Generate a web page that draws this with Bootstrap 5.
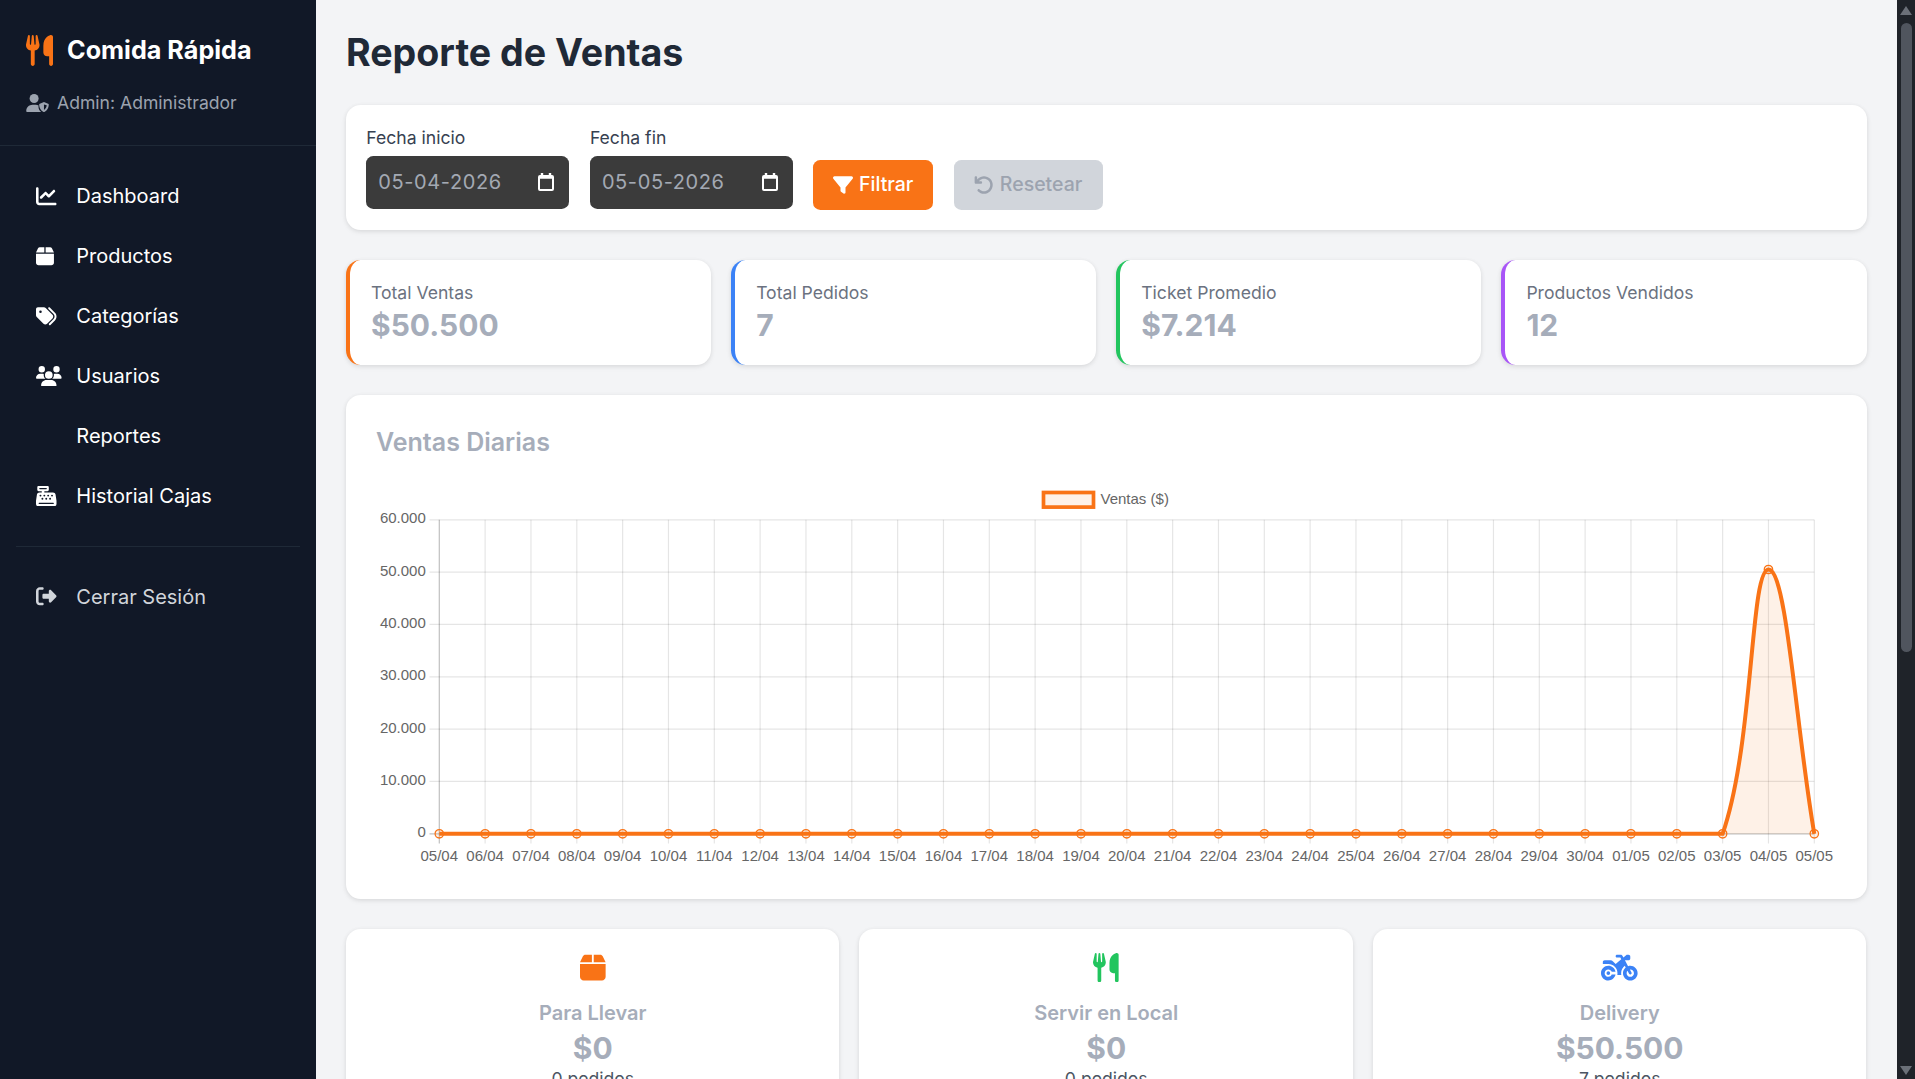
<!DOCTYPE html>
<html lang="es">
<head>
    <meta charset="UTF-8">
    <meta name="viewport" content="width=device-width, initial-scale=1.0">
    <title>Reporte de Ventas</title>
    <link rel="stylesheet" href="https://cdn.jsdelivr.net/npm/bootstrap@5.3.0/dist/css/bootstrap.min.css">
    <style>
        body {
            font-family: Inter, "Liberation Sans", sans-serif;
            background-color: #f3f4f6;
            color: #1f2937;
            height: 1079px;
        }
        .sidebar {
            width: 316px;
            background-color: #111827;
        }
        .brand {
            height: 146px;
            padding: 34px 26px 0;
            border-bottom: 1px solid #1f2937;
        }
        .brand-name {
            font-size: 25.2px;
            font-weight: 700;
            color: #fff;
            line-height: 32px;
            margin-left: 14px;
        }
        .brand-user {
            font-size: 17.6px;
            color: #9ca3af;
            margin-top: 24px;
        }
        .side-nav { padding: 20px 16px 0; }
        .side-link {
            height: 60px;
            color: #fff;
            font-size: 20px;
            text-decoration: none;
            padding-left: 20px;
        }
        .side-link svg { display: block; height: 20.5px; width: auto; fill: currentColor; }
        .side-icon { width: 40.3px; flex: none; }
        .side-divider { border-top: 1px solid #1f2937; margin: 19.5px 0 20px; }
        .logout { color: #d1d5db; }

        .main-area { padding: 31px 30.5px 0 30px; min-width: 0; }
        .page-title {
            font-size: 37.6px;
            font-weight: 700;
            line-height: 44px;
            margin-bottom: 30px;
            color: #1f2937;
        }
        .panel {
            background: #fff;
            border: 0;
            border-radius: 14.7px;
            box-shadow: 0 1px 4px rgba(0, 0, 0, .08), 0 2px 6px rgba(0, 0, 0, .05);
        }
        .filter-panel { height: 125px; padding: 0 19.5px 20px 20.3px; gap: 20.6px; }
        .filter-label { font-size: 17.6px; line-height: 24px; margin-bottom: 6px; color: #374151; }
        .date-box {
            width: 203px;
            height: 53px;
            margin-bottom: 1px;
            background: #3b3b3b;
            border-radius: 7.3px;
            color: #a3a9b3;
            font-size: 20px;
            letter-spacing: .6px;
            padding: 0 15px 1px 12px;
        }
        .date-box svg { width: 16px; height: 18px; }
        .btn-report {
            height: 50px;
            border: 0;
            border-radius: 7.3px;
            font-size: 19.5px;
            font-weight: 500;
            gap: 6px;
        }
        .btn-report svg { width: 20px; height: 20px; fill: currentColor; }
        .btn-filter { width: 119.5px; background: #f97316; color: #fff; }
        .btn-reset { width: 149px; background: #d1d5db; color: #9ca3af; }
        .btn-filter:hover, .btn-filter:active { background: #f97316; color: #fff; }

        .tight-row { --bs-gutter-x: 20px; --bs-gutter-y: 0; }
        .stat-row { margin-top: 30px; }
        .stat-card { height: 105px; border-left: 4.9px solid; padding: 21px 0 0 21px; }
        .accent-orange { border-left-color: #f97316; }
        .accent-blue { border-left-color: #3b82f6; }
        .accent-green { border-left-color: #22c55e; }
        .accent-purple { border-left-color: #a855f7; }
        .stat-label { font-size: 17.6px; line-height: 24px; color: #6b7280; }
        .stat-value { font-size: 30px; font-weight: 700; line-height: 40px; color: #a6adba; }
        .chart-panel { height: 504px; margin-top: 29.5px; padding: 29.3px 0 0 30px; }
        .chart-title { font-size: 25px; font-weight: 600; line-height: 36px; color: #a6adba; margin: 0; }
        .chart-svg { position: absolute; left: 0; top: 0; width: 1521px; height: 504.5px; }
        .chart-svg text { font-family: "Liberation Sans", Arial, sans-serif; font-size: 15px; fill: #666; }
        .type-row { margin-top: 30px; }
        .type-card { height: 200px; padding-top: 24.5px; text-align: center; }
        .type-card svg { height: 29.3px; display: block; margin: 0 auto; }
        .type-name { font-size: 20px; font-weight: 600; line-height: 30px; margin-top: 15.5px; color: #a6adba; }
        .type-value { font-size: 30px; font-weight: 700; line-height: 40px; color: #a6adba; }
        .type-count { font-size: 17.6px; line-height: 24px; margin-top: -1px; color: #4b5563; }

        .fake-scroll { width: 18px; background: #1f2329; }
        .fake-thumb { width: 11px; height: 629px; margin: 23px 0 0 4px; background: #50555e; border-radius: 6px; }
        .scroll-up, .scroll-down { left: 3px; width: 0; height: 0; border-left: 6.5px solid transparent; border-right: 6.5px solid transparent; }
        .scroll-up { top: 6px; border-bottom: 9px solid #6b7078; }
        .scroll-down { bottom: 4px; border-top: 9px solid #6b7078; }
    </style>
</head>
<body class="d-flex overflow-hidden">
    <!-- Sidebar -->
    <aside class="sidebar flex-shrink-0">
        <div class="brand">
            <div class="d-flex align-items-center">
                <svg viewBox="0 0 448 512" width="27" height="31" fill="#f97316"><path d="M416 0C400 0 288 32 288 176V288c0 35.3 28.7 64 64 64h32V480c0 17.7 14.3 32 32 32s32-14.3 32-32V352 240 32c0-17.7-14.3-32-32-32zM64 16C64 7.8 57.9 1 49.7 .1S34.2 4.6 32.4 12.5L2.1 148.8C.7 155.1 0 161.5 0 167.9c0 45.9 35.1 83.6 80 87.7V480c0 17.7 14.3 32 32 32s32-14.3 32-32V255.6c44.9-4.1 80-41.8 80-87.7c0-6.4-.7-12.8-2.1-19.1L191.6 12.5c-1.8-8-9.3-13.3-17.4-12.4S160 7.8 160 16V150.2c0 5.4-4.4 9.8-9.8 9.8c-5.1 0-9.3-3.9-9.8-9L127.9 14.6C127.2 6.3 120.3 0 112 0s-15.2 6.3-15.9 14.6L83.7 151c-.5 5.1-4.7 9-9.8 9c-5.4 0-9.8-4.4-9.8-9.8V16zm48.3 152l-.3 0-.3 0 .3-.7 .3 .7z"/></svg>
                <span class="brand-name">Comida Rápida</span>
            </div>
            <div class="brand-user d-flex align-items-center">
                <svg viewBox="0 0 640 512" width="23" height="18" fill="#9ca3af" class="me-2 flex-shrink-0"><circle cx="224" cy="128" r="128"/><path d="M178 304h92c30 0 58 8 82 22-2 10-4 22-4 34 0 60 28 118 80 152H30C13 512 0 499 0 482 0 384 80 304 178 304z"/><path fill-rule="evenodd" d="M504 230l118 46c10 4 18 14 18 25 0 70-30 170-124 208-8 3-16 3-24 0-94-38-124-138-124-208 0-11 8-21 18-25l118-46zm0 66v156c44-20 72-70 78-130l-78-26z"/></svg>
                <span>Admin: Administrador</span>
            </div>
        </div>
        <nav class="side-nav">
            <a href="#" class="side-link d-flex align-items-center">
                <span class="side-icon"><svg viewBox="0 0 512 512"><path d="M64 64c0-17.7-14.3-32-32-32S0 46.3 0 64V400c0 44.2 35.8 80 80 80H480c17.7 0 32-14.3 32-32s-14.3-32-32-32H80c-8.8 0-16-7.2-16-16V64zm406.6 86.6c12.5-12.5 12.5-32.8 0-45.3s-32.8-12.5-45.3 0L320 210.7l-57.4-57.4c-12.5-12.5-32.8-12.5-45.3 0l-112 112c-12.5 12.5-12.5 32.8 0 45.3s32.8 12.5 45.3 0L240 221.3l57.4 57.4c12.5 12.5 32.8 12.5 45.3 0l128-128z"/></svg></span>Dashboard
            </a>
            <a href="#" class="side-link d-flex align-items-center">
                <span class="side-icon"><svg viewBox="0 0 448 512"><path d="M50.7 58.5L0 160H208V32H93.7C75.5 32 58.9 42.3 50.7 58.5zM240 160H448L397.3 58.5C389.1 42.3 372.5 32 354.3 32H240V160zm208 32H0V416c0 35.3 28.7 64 64 64H384c35.3 0 64-28.7 64-64V192z"/></svg></span>Productos
            </a>
            <a href="#" class="side-link d-flex align-items-center">
                <span class="side-icon"><svg viewBox="0 0 512 512"><path d="M345 39.1L472.8 168.4c52.4 53 52.4 138.2 0 191.2L360.8 472.9c-9.3 9.4-24.5 9.5-33.9 .2s-9.5-24.5-.2-33.9L438.6 325.9c33.9-34.3 33.9-89.4 0-123.7L310.9 72.9c-9.3-9.4-9.2-24.6 .2-33.9s24.6-9.2 33.9 .2zM0 229.5V80C0 53.5 21.5 32 48 32H197.5c17 0 33.3 6.7 45.3 18.7l168 168c25 25 25 65.5 0 90.5L277.3 442.7c-25 25-65.5 25-90.5 0l-168-168C6.7 262.7 0 246.5 0 229.5zM144 144a32 32 0 1 0 -64 0 32 32 0 1 0 64 0z"/></svg></span>Categorías
            </a>
            <a href="#" class="side-link d-flex align-items-center">
                <span class="side-icon"><svg viewBox="0 0 640 512"><path d="M144 0a80 80 0 1 1 0 160A80 80 0 1 1 144 0zM512 0a80 80 0 1 1 0 160A80 80 0 1 1 512 0zM0 298.7C0 239.8 47.8 192 106.7 192h42.7c15.9 0 31 3.5 44.6 9.7c-1.3 7.2-1.9 14.7-1.9 22.3c0 38.2 16.8 72.5 43.3 96c-.2 0-.4 0-.7 0H21.3C9.6 320 0 310.4 0 298.7zM405.3 320c-.2 0-.4 0-.7 0c26.6-23.5 43.3-57.8 43.3-96c0-7.6-.7-15-1.9-22.3c13.6-6.3 28.7-9.7 44.6-9.7h42.7C592.2 192 640 239.8 640 298.7c0 11.8-9.6 21.3-21.3 21.3H405.3zM224 224a96 96 0 1 1 192 0 96 96 0 1 1 -192 0zM128 485.3C128 411.7 187.7 352 261.3 352H378.7C452.3 352 512 411.7 512 485.3c0 14.7-11.9 26.7-26.7 26.7H154.7c-14.7 0-26.7-11.9-26.7-26.7z"/></svg></span>Usuarios
            </a>
            <a href="#" class="side-link d-flex align-items-center">
                <span class="side-icon"></span>Reportes
            </a>
            <a href="#" class="side-link d-flex align-items-center">
                <span class="side-icon"><svg viewBox="0 0 512 512"><path d="M64 0C46.3 0 32 14.3 32 32V96c0 17.7 14.3 32 32 32h80v32H87c-31.6 0-58.5 23.1-63.3 54.4L1.1 364.1C.4 368.8 0 373.6 0 378.4V448c0 35.3 28.7 64 64 64H448c35.3 0 64-28.7 64-64V378.4c0-4.8-.4-9.6-1.1-14.4L488.2 214.4C483.5 183.1 456.6 160 425 160H208V128h80c17.7 0 32-14.3 32-32V32c0-17.7-14.3-32-32-32H64zM96 48H256c8.8 0 16 7.2 16 16s-7.2 16-16 16H96c-8.8 0-16-7.2-16-16s7.2-16 16-16zM64 432c0-8.8 7.2-16 16-16H432c8.8 0 16 7.2 16 16s-7.2 16-16 16H80c-8.8 0-16-7.2-16-16zm48-168a24 24 0 1 1 0-48 24 24 0 1 1 0 48zm120-24a24 24 0 1 1 -48 0 24 24 0 1 1 48 0zM160 344a24 24 0 1 1 0-48 24 24 0 1 1 0 48zM328 240a24 24 0 1 1 -48 0 24 24 0 1 1 48 0zM256 344a24 24 0 1 1 0-48 24 24 0 1 1 0 48zM424 240a24 24 0 1 1 -48 0 24 24 0 1 1 48 0zM352 344a24 24 0 1 1 0-48 24 24 0 1 1 0 48z"/></svg></span>Historial Cajas
            </a>
            <div class="side-divider"></div>
            <a href="#" class="side-link logout d-flex align-items-center">
                <span class="side-icon"><svg viewBox="0 0 512 512"><path d="M377.9 105.9L500.7 228.7c7.2 7.2 11.3 17.1 11.3 27.3s-4.1 20.1-11.3 27.3L377.9 406.1c-6.4 6.4-15 9.9-24 9.9c-18.7 0-33.9-15.2-33.9-33.9l0-62.1-128 0c-17.7 0-32-14.3-32-32l0-64c0-17.7 14.3-32 32-32l128 0 0-62.1c0-18.7 15.2-33.9 33.9-33.9c9 0 17.6 3.6 24 9.9zM160 96L96 96c-17.7 0-32 14.3-32 32l0 256c0 17.7 14.3 32 32 32l64 0c17.7 0 32 14.3 32 32s-14.3 32-32 32l-64 0c-53 0-96-43-96-96L0 128C0 75 43 32 96 32l64 0c17.7 0 32 14.3 32 32s-14.3 32-32 32z"/></svg></span>Cerrar Sesión
            </a>
        </nav>
    </aside>

    <!-- Main content -->
    <main class="main-area flex-grow-1 overflow-hidden">
        <h1 class="page-title">Reporte de Ventas</h1>

        <div class="panel filter-panel d-flex align-items-end">
            <div>
                <div class="filter-label">Fecha inicio</div>
                <div class="date-box d-flex align-items-center justify-content-between">
                    <span>05-04-2026</span>
                    <svg viewBox="0 0 16 18" fill="none" stroke="#fff" stroke-width="2"><rect x="1" y="3" width="14" height="14" rx="1"/><path d="M1 4.5h14M4 0v3M12 0v3" stroke-width="2.4"/></svg>
                </div>
            </div>
            <div>
                <div class="filter-label">Fecha fin</div>
                <div class="date-box d-flex align-items-center justify-content-between">
                    <span>05-05-2026</span>
                    <svg viewBox="0 0 16 18" fill="none" stroke="#fff" stroke-width="2"><rect x="1" y="3" width="14" height="14" rx="1"/><path d="M1 4.5h14M4 0v3M12 0v3" stroke-width="2.4"/></svg>
                </div>
            </div>
            <button class="btn btn-report btn-filter d-flex align-items-center justify-content-center p-0" type="button">
                <svg viewBox="0 0 512 512"><path d="M3.9 54.9C10.5 40.9 24.5 32 40 32H472c15.5 0 29.5 8.9 36.1 22.9s4.6 30.5-5.2 42.5L320 320.9V448c0 12.1-6.8 23.2-17.7 28.6s-23.8 4.3-33.5-3l-64-48c-8.1-6-12.8-15.5-12.8-25.6V320.9L9 97.3C-.7 85.4-2.8 68.8 3.9 54.9z"/></svg>Filtrar
            </button>
            <button class="btn btn-report btn-reset d-flex align-items-center justify-content-center p-0" type="button">
                <svg viewBox="0 0 512 512"><path d="M125.7 160H176c17.7 0 32 14.3 32 32s-14.3 32-32 32H48c-17.7 0-32-14.3-32-32V64c0-17.7 14.3-32 32-32s32 14.3 32 32v51.2L97.6 97.6c87.5-87.5 229.3-87.5 316.8 0s87.5 229.3 0 316.8s-229.3 87.5-316.8 0c-12.5-12.5-12.5-32.8 0-45.3s32.8-12.5 45.3 0c62.5 62.5 163.8 62.5 226.3 0s62.5-163.8 0-226.3s-163.8-62.5-226.3 0L125.7 160z"/></svg>Resetear
            </button>
        </div>

        <div class="row tight-row stat-row">
            <div class="col-3"><div class="panel stat-card accent-orange"><div class="stat-label">Total Ventas</div><div class="stat-value">$50.500</div></div></div>
            <div class="col-3"><div class="panel stat-card accent-blue"><div class="stat-label">Total Pedidos</div><div class="stat-value">7</div></div></div>
            <div class="col-3"><div class="panel stat-card accent-green"><div class="stat-label">Ticket Promedio</div><div class="stat-value">$7.214</div></div></div>
            <div class="col-3"><div class="panel stat-card accent-purple"><div class="stat-label">Productos Vendidos</div><div class="stat-value">12</div></div></div>
        </div>

        <div class="panel chart-panel position-relative">
            <h2 class="chart-title">Ventas Diarias</h2>
            <svg id="salesChart" class="chart-svg" viewBox="0 0 1521 504.5"></svg>
        </div>

        <div class="row tight-row type-row">
            <div class="col-4"><div class="panel type-card">
                <svg viewBox="0 0 448 512" fill="#f97316"><path d="M50.7 58.5L0 160H208V32H93.7C75.5 32 58.9 42.3 50.7 58.5zM240 160H448L397.3 58.5C389.1 42.3 372.5 32 354.3 32H240V160zm208 32H0V416c0 35.3 28.7 64 64 64H384c35.3 0 64-28.7 64-64V192z"/></svg>
                <div class="type-name">Para Llevar</div><div class="type-value">$0</div><div class="type-count">0 pedidos</div>
            </div></div>
            <div class="col-4"><div class="panel type-card">
                <svg viewBox="0 0 448 512" fill="#22c55e"><path d="M416 0C400 0 288 32 288 176V288c0 35.3 28.7 64 64 64h32V480c0 17.7 14.3 32 32 32s32-14.3 32-32V352 240 32c0-17.7-14.3-32-32-32zM64 16C64 7.8 57.9 1 49.7 .1S34.2 4.6 32.4 12.5L2.1 148.8C.7 155.1 0 161.5 0 167.9c0 45.9 35.1 83.6 80 87.7V480c0 17.7 14.3 32 32 32s32-14.3 32-32V255.6c44.9-4.1 80-41.8 80-87.7c0-6.4-.7-12.8-2.1-19.1L191.6 12.5c-1.8-8-9.3-13.3-17.4-12.4S160 7.8 160 16V150.2c0 5.4-4.4 9.8-9.8 9.8c-5.1 0-9.3-3.9-9.8-9L127.9 14.6C127.2 6.3 120.3 0 112 0s-15.2 6.3-15.9 14.6L83.7 151c-.5 5.1-4.7 9-9.8 9c-5.4 0-9.8-4.4-9.8-9.8V16zm48.3 152l-.3 0-.3 0 .3-.7 .3 .7z"/></svg>
                <div class="type-name">Servir en Local</div><div class="type-value">$0</div><div class="type-count">0 pedidos</div>
            </div></div>
            <div class="col-4"><div class="panel type-card">
                <svg viewBox="0 0 640 512" fill="#3b82f6"><path d="M280 32c-13.3 0-24 10.7-24 24s10.7 24 24 24h57.7l16.4 30.3L256 192l-45.3-45.3c-12-12-28.3-18.7-45.3-18.7H64c-17.7 0-32 14.3-32 32v32h96c88.4 0 160 71.6 160 160c0 11-1.1 21.7-3.2 32h70.4c-2.1-10.3-3.2-21-3.2-32c0-52.2 25-98.6 63.7-127.8l15.4 28.6C402.4 276.3 384 312 384 352c0 70.7 57.3 128 128 128s128-57.3 128-128s-57.3-128-128-128c-13.5 0-26.5 2.1-38.7 6L418.2 128H480c17.7 0 32-14.3 32-32V64c0-17.7-14.3-32-32-32H459.6c-7.5 0-14.7 2.6-20.5 7.4L391.7 78.9l-14-26c-7-12.9-20.5-21-35.2-21H280zM462.7 311.2l28.2 52.2c6.3 11.7 20.9 16 32.5 9.7s16-20.9 9.7-32.5l-28.2-52.2c2.3-.3 4.7-.4 7.1-.4c35.3 0 64 28.7 64 64s-28.7 64-64 64s-64-28.7-64-64c0-15.5 5.5-29.7 14.7-40.8zM187.3 376c-9.5 23.5-32.5 40-59.3 40c-35.3 0-64-28.7-64-64s28.7-64 64-64c26.9 0 49.9 16.5 59.3 40h66.4C242.5 268.8 190.5 224 128 224C57.3 224 0 281.3 0 352s57.3 128 128 128c62.5 0 114.5-44.8 125.8-104H187.3zM128 384a32 32 0 1 0 0-64 32 32 0 1 0 0 64z"/></svg>
                <div class="type-name">Delivery</div><div class="type-value">$50.500</div><div class="type-count">7 pedidos</div>
            </div></div>
        </div>
    </main>

    <!-- Page scrollbar as it appears in the picture -->
    <div class="fake-scroll flex-shrink-0 position-relative">
        <div class="scroll-up position-absolute"></div>
        <div class="fake-thumb"></div>
        <div class="scroll-down position-absolute"></div>
    </div>

    <script>
        // Daily sales line chart, coordinates relative to the card at (346, 394.5)
        const OX = 346, OY = 394.5;
        const left = 439.3 - OX, right = 1814.3 - OX, top_ = 519.3 - OY, bottom = 833.3 - OY;
        const labels = [];
        for (let d = 5; d <= 30; d++) labels.push(String(d).padStart(2, "0") + "/04");
        for (let d = 1; d <= 5; d++) labels.push(String(d).padStart(2, "0") + "/05");
        const values = labels.map((l) => (l === "04/05" ? 50500 : 0));
        const stepX = (right - left) / (labels.length - 1);
        const pts = values.map((v, i) => ({ x: left + i * stepX, y: bottom - (v / 60000) * (bottom - top_) }));

        let svg = "";
        for (let i = 0; i <= 6; i++) {
            const y = top_ + (i * (bottom - top_)) / 6;
            const stroke = i === 6 ? "rgba(0,0,0,.25)" : "rgba(0,0,0,.1)";
            svg += `<line x1="${left - 9.8}" x2="${right}" y1="${y}" y2="${y}" stroke="${stroke}" stroke-width="1.2"/>`;
            const label = ((6 - i) * 10000).toLocaleString("de-DE");
            svg += `<text x="${left - 13.5}" y="${y + 3.5}" text-anchor="end">${label}</text>`;
        }
        pts.forEach((p, i) => {
            const stroke = i === 0 ? "rgba(0,0,0,.25)" : "rgba(0,0,0,.1)";
            svg += `<line x1="${p.x}" x2="${p.x}" y1="${top_}" y2="${bottom + 9.8}" stroke="${stroke}" stroke-width="1.2"/>`;
            svg += `<text x="${p.x}" y="${bottom + 27.5}" text-anchor="middle">${labels[i]}</text>`;
        });

        // same spline as a tension 0.4 line, control points capped to the plot
        const clampY = (y) => Math.min(bottom, Math.max(top_, y));
        const cps = pts.map((p, i) => {
            const a = pts[i - 1] || p, b = pts[i + 1] || p;
            const d01 = Math.hypot(p.x - a.x, p.y - a.y), d12 = Math.hypot(b.x - p.x, b.y - p.y);
            const sum = d01 + d12 || 1;
            const fa = (0.4 * d01) / sum, fb = (0.4 * d12) / sum;
            return {
                px: p.x - fa * (b.x - a.x), py: clampY(p.y - fa * (b.y - a.y)),
                nx: p.x + fb * (b.x - a.x), ny: clampY(p.y + fb * (b.y - a.y)),
            };
        });
        let line = `M${pts[0].x} ${pts[0].y}`;
        for (let i = 1; i < pts.length; i++) {
            line += `C${cps[i - 1].nx} ${cps[i - 1].ny} ${cps[i].px} ${cps[i].py} ${pts[i].x} ${pts[i].y}`;
        }
        svg += `<path d="${line}L${right} ${bottom}L${left} ${bottom}Z" fill="rgba(249,115,22,.1)"/>`;
        svg += `<path d="${line}" fill="none" stroke="#f97316" stroke-width="4"/>`;
        pts.forEach((p) => {
            svg += `<circle cx="${p.x}" cy="${p.y}" r="4.2" fill="rgba(249,115,22,.1)" stroke="#f97316" stroke-width="1.3"/>`;
        });

        // legend
        svg += `<rect x="${1043.5 - OX}" y="${492 - OY}" width="50" height="14.6" fill="rgba(249,115,22,.1)" stroke="#f97316" stroke-width="3.7"/>`;
        svg += `<text x="${1100.5 - OX}" y="${503 - OY}">Ventas ($)</text>`;
        document.getElementById("salesChart").innerHTML = svg;
    </script>
    <script src="https://cdn.jsdelivr.net/npm/bootstrap@5.3.0/dist/js/bootstrap.bundle.min.js"></script>
</body>
</html>
